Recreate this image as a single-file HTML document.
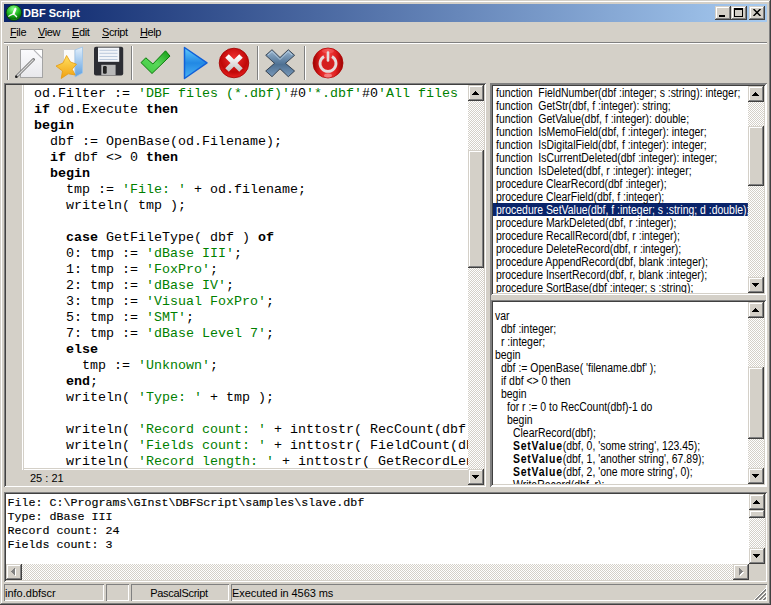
<!DOCTYPE html>
<html><head><meta charset="utf-8">
<style>
*{margin:0;padding:0;box-sizing:border-box}
html,body{width:771px;height:605px;overflow:hidden;background:#D4D0C8;font-family:"Liberation Sans",sans-serif;font-size:11px;color:#000}
.a{position:absolute}
.sunk{box-shadow:inset 1px 1px 0 #808080,inset -1px -1px 0 #fff,inset 2px 2px 0 #404040,inset -2px -2px 0 #D4D0C8}
.btn{background:#D4D0C8;box-shadow:inset -1px -1px 0 #404040,inset 1px 1px 0 #D4D0C8,inset -2px -2px 0 #808080,inset 2px 2px 0 #fff}
.track{background:repeating-conic-gradient(#fff 0 25%,#D4D0C8 0 50%) 0 0/2px 2px}
.mono{font-family:"Liberation Mono",monospace}
pre{font-family:"Liberation Mono",monospace;white-space:pre}
.k{font-weight:bold}
#ex b{letter-spacing:0.9px}
.s{color:#008000}
.tri-up{width:0;height:0;border-left:4px solid transparent;border-right:4px solid transparent;border-bottom:4px solid #000}
.tri-dn{width:0;height:0;border-left:4px solid transparent;border-right:4px solid transparent;border-top:4px solid #000}
.u{text-decoration:underline}
</style></head><body>
<!-- window frame -->
<div class="a" style="left:0;top:0;width:771px;height:605px;box-shadow:inset -1px -1px 0 #404040,inset 1px 1px 0 #D4D0C8,inset -2px -2px 0 #808080,inset 2px 2px 0 #fff"></div>
<!-- title bar -->
<div class="a" style="left:4px;top:4px;width:763px;height:18px;background:linear-gradient(to right,#0A246A,#A6CAF0)"></div>
<div class="a" id="ticon" style="left:0;top:0;width:24px;height:24px">
<svg width="24" height="24" viewBox="0 0 24 24"><defs><radialGradient id="gti" cx="0.45" cy="0.25" r="0.8"><stop offset="0" stop-color="#8aff8a"/><stop offset="0.55" stop-color="#18b018"/><stop offset="0.8" stop-color="#0a700a"/><stop offset="1" stop-color="#30c030"/></radialGradient></defs>
<circle cx="13.9" cy="12.8" r="7.8" fill="url(#gti)" stroke="#052a05" stroke-width="0.7"/>
<path d="M15.6 8.3 L14.2 11.5 L13.2 14 L10.5 15.2 L8.8 16.2 M13.2 14 L15.2 15.2 L16.6 16.8" stroke="#f4f4f4" stroke-width="1.3" fill="none" stroke-linecap="round"/><path d="M15.4 9 L13.6 13.5" stroke="#fff" stroke-width="2.2" stroke-linecap="round"/>
</svg></div>
<div class="a" style="left:23px;top:6px;color:#fff;font-weight:bold;font-size:11px;line-height:14px">DBF Script</div>
<div class="a btn" style="left:715px;top:6px;width:16px;height:14px"><div class="a" style="left:4px;top:9px;width:6px;height:2px;background:#000"></div></div>
<div class="a btn" style="left:731px;top:6px;width:16px;height:14px"><div class="a" style="left:3px;top:2px;width:9px;height:9px;border:1px solid #000;border-top-width:2px"></div></div>
<div class="a btn" style="left:749px;top:6px;width:16px;height:14px"><svg class="a" style="left:4px;top:3px" width="8" height="7" viewBox="0 0 8 7"><path d="M0.5 0 L7.5 7 M7.5 0 L0.5 7" stroke="#000" stroke-width="1.5"/></svg></div>
<!-- menu -->
<div class="a" style="left:10px;top:26px;line-height:13px;letter-spacing:-0.4px"><span class="u">F</span>ile</div>
<div class="a" style="left:38px;top:26px;line-height:13px;letter-spacing:-0.4px"><span class="u">V</span>iew</div>
<div class="a" style="left:72px;top:26px;line-height:13px;letter-spacing:-0.4px"><span class="u">E</span>dit</div>
<div class="a" style="left:102px;top:26px;line-height:13px;letter-spacing:-0.4px"><span class="u">S</span>cript</div>
<div class="a" style="left:140px;top:26px;line-height:13px;letter-spacing:-0.4px"><span class="u">H</span>elp</div>
<div class="a" style="left:4px;top:42px;width:763px;height:1px;background:#808080"></div>
<div class="a" style="left:4px;top:43px;width:763px;height:1px;background:#fff"></div>
<!-- toolbar separators -->
<div class="a" style="left:7px;top:46px;width:1px;height:34px;background:#808080"></div>
<div class="a" style="left:8px;top:46px;width:1px;height:34px;background:#fff"></div>

<svg class="a" style="left:0;top:0" width="360" height="84" viewBox="0 0 360 84">
<defs>
<linearGradient id="gdoc" x1="0" y1="0" x2="0" y2="1"><stop offset="0" stop-color="#fbfbfd"/><stop offset="1" stop-color="#e8e8ec"/></linearGradient>
<linearGradient id="gdoor" x1="0" y1="0" x2="0" y2="1"><stop offset="0" stop-color="#e4f0fb"/><stop offset="1" stop-color="#5b9ee0"/></linearGradient>
<linearGradient id="gstar" x1="0" y1="0" x2="0" y2="1"><stop offset="0" stop-color="#ffe060"/><stop offset="1" stop-color="#f0a010"/></linearGradient>
<linearGradient id="gchk" x1="1" y1="0" x2="0" y2="1"><stop offset="0" stop-color="#109a10"/><stop offset="0.5" stop-color="#5ad85a"/><stop offset="1" stop-color="#3cc83c"/></linearGradient>
<linearGradient id="gplay" x1="0" y1="0" x2="0" y2="1"><stop offset="0" stop-color="#62ccfc"/><stop offset="0.5" stop-color="#2288e4"/><stop offset="1" stop-color="#4ab4f4"/></linearGradient>
<radialGradient id="gred" cx="0.5" cy="0.35" r="0.65"><stop offset="0" stop-color="#f03030"/><stop offset="0.7" stop-color="#c00808"/><stop offset="1" stop-color="#e82020"/></radialGradient>
<linearGradient id="gblx" x1="0" y1="0" x2="0" y2="1"><stop offset="0" stop-color="#9ab6d0"/><stop offset="0.45" stop-color="#5a7c9e"/><stop offset="0.55" stop-color="#4e7092"/><stop offset="1" stop-color="#7a9aba"/></linearGradient>
<linearGradient id="gx" x1="0" y1="0" x2="0" y2="1"><stop offset="0" stop-color="#ffffff"/><stop offset="1" stop-color="#c8c8c8"/></linearGradient>
<linearGradient id="gpow" x1="0" y1="0" x2="1" y2="0"><stop offset="0" stop-color="#9a0000"/><stop offset="0.25" stop-color="#e02020"/><stop offset="0.5" stop-color="#f04040"/><stop offset="0.75" stop-color="#e02020"/><stop offset="1" stop-color="#9a0000"/></linearGradient>
</defs>
<!-- new doc -->
<rect x="20.5" y="49.5" width="22" height="28" fill="url(#gdoc)" stroke="#a4a4a4"/>
<path d="M34 50 L42 58" stroke="#b8b8bc" stroke-width="1.2"/>
<path d="M35 50 H42 V57 Z" fill="#ffffff"/>
<path d="M16.5 76.5 L33.5 59.5" stroke="#707070" stroke-width="3" stroke-linecap="round"/>
<path d="M17 76 L33.5 59.5" stroke="#d8d8d8" stroke-width="1.2"/>
<circle cx="16.3" cy="76.7" r="1.2" fill="#202020"/>
<!-- open -->
<path d="M63.5 49.5 H75 V74.5 H63.5 Z" fill="#fafafa" stroke="#d0d0d0"/>
<path d="M75 50 L82.5 47 V73 L75 77 Z" fill="url(#gdoor)" stroke="#9cc4ea" stroke-width="0.8"/>
<path d="M66.6 55.5 L70.5 62 L76.5 64.2 L72.2 69.2 L75.2 75 L68.2 73.8 L61.2 78.5 L62.5 71 L56 66 L63 63 Z" fill="url(#gstar)" stroke="#e59a10" stroke-width="0.8" stroke-linejoin="round"/>
<!-- floppy -->
<rect x="94" y="46.8" width="29.2" height="28.8" rx="2" fill="#2c2d33"/>
<rect x="98" y="47.6" width="21.2" height="14.2" fill="#f2f4f8"/>
<path d="M99.5 50.3 H117.5 M99.5 53.3 H117.5 M99.5 56.5 H117.5 M99.5 59.5 H117.5" stroke="#b4c4d8" stroke-width="0.9"/>
<rect x="101.3" y="64.8" width="14.3" height="10.4" fill="#b8b8b8"/>
<rect x="103" y="66" width="3.7" height="7.8" rx="1.2" fill="#222"/>
<!-- separator -->
<rect x="131" y="46" width="1" height="34" fill="#808080"/><rect x="132" y="46" width="1" height="34" fill="#fff"/>
<!-- check -->
<path d="M141 62.6 L145.8 57.8 L152.9 64 L165.5 50.8 L170 56.1 L152 73.5 Z" fill="url(#gchk)" stroke="#0a7a0a" stroke-width="1" stroke-linejoin="round"/>
<!-- play -->
<path d="M184.5 47.5 L207 62.8 L184.5 78.5 Z" fill="url(#gplay)" stroke="#1060d8" stroke-width="1.5" stroke-linejoin="round"/>
<!-- red x -->
<circle cx="234" cy="63" r="14.8" fill="url(#gred)" stroke="#a00000" stroke-width="0.8"/>
<path d="M227 56 L241 70 M241 56 L227 70" stroke="url(#gx)" stroke-width="5"/>
<!-- separator -->
<rect x="257" y="46" width="1" height="34" fill="#808080"/><rect x="258" y="46" width="1" height="34" fill="#fff"/>
<!-- blue x -->
<path d="M265.7 55.3 L272 49.7 L280 57.5 L288.3 49.7 L294.6 55.3 L285.5 63.3 L294.6 71 L288.3 76.7 L280 68.8 L272 76.7 L265.7 71 L274.5 63.3 Z" fill="url(#gblx)" stroke="#1e2a38" stroke-width="0.8" stroke-linejoin="round"/>
<path d="M268 55 L272 51.5 L280 59.5 M292 55 L288 51.5 L280 59.5" stroke="#c8dcec" stroke-width="0.9" fill="none" opacity="0.8"/>
<!-- separator -->
<rect x="304" y="46" width="1" height="34" fill="#808080"/><rect x="305" y="46" width="1" height="34" fill="#fff"/>
<!-- power -->
<circle cx="328" cy="63" r="15" fill="url(#gpow)" stroke="#b00000" stroke-width="0.8"/>
<ellipse cx="328" cy="51" rx="6" ry="2.5" fill="#ff9090" opacity="0.3"/>
<ellipse cx="328" cy="75.5" rx="4" ry="2" fill="#ffd0d0" opacity="0.45"/>
<circle cx="328" cy="64" r="6" fill="#d42020"/>
<path d="M324 56.5 A8 8 0 1 0 332 56.5" stroke="#e4dcdc" stroke-width="2.8" fill="none"/>
<path d="M328 52.5 V60.5" stroke="#e4dcdc" stroke-width="2.6" stroke-linecap="round"/>
</svg>

<!-- editor -->
<div class="a sunk" style="left:4px;top:83px;width:482px;height:404px;background:#D4D0C8"></div>
<div class="a" style="left:22px;top:85px;width:446px;height:385px;background:#fff;box-shadow:inset 1px 0 0 #fff,inset 2px 0 0 #D4D0C8,inset 0 -1px 0 #fff,inset 0 -2px 0 #D4D0C8"></div>
<div class="a" style="left:24px;top:85px;width:444px;height:383px;overflow:hidden"><pre class="a" id="code" style="left:10px;top:1px;font-size:13.333px;line-height:16px">od.Filter := <span class="s">'DBF files (*.dbf)'</span>#0<span class="s">'*.dbf'</span>#0<span class="s">'All files</span>
<span class="k">if</span> od.Execute <span class="k">then</span>
<span class="k">begin</span>
  dbf := OpenBase(od.Filename);
  <span class="k">if</span> dbf &lt;&gt; 0 <span class="k">then</span>
  <span class="k">begin</span>
    tmp := <span class="s">'File: '</span> + od.filename;
    writeln( tmp );

    <span class="k">case</span> GetFileType( dbf ) <span class="k">of</span>
    0: tmp := <span class="s">'dBase III'</span>;
    1: tmp := <span class="s">'FoxPro'</span>;
    2: tmp := <span class="s">'dBase IV'</span>;
    3: tmp := <span class="s">'Visual FoxPro'</span>;
    5: tmp := <span class="s">'SMT'</span>;
    7: tmp := <span class="s">'dBase Level 7'</span>;
    <span class="k">else</span>
      tmp := <span class="s">'Unknown'</span>;
    <span class="k">end</span>;
    writeln( <span class="s">'Type: '</span> + tmp );

    writeln( <span class="s">'Record count: '</span> + inttostr( RecCount(dbf
    writeln( <span class="s">'Fields count: '</span> + inttostr( FieldCount(dbf
    writeln( <span class="s">'Record length: '</span> + inttostr( GetRecordLen</pre></div>
<div class="a track" style="left:468px;top:85px;width:16px;height:399px"></div>
<div class="a btn" style="left:468px;top:85px;width:16px;height:16px"><svg class="a" style="left:0;top:0" width="16" height="16" shape-rendering="crispEdges"><path d="M7 6h1v1h-1zM6 7h3v1h-3zM5 8h5v1h-5zM4 9h7v1h-7z" fill="#000"/></svg></div>
<div class="a btn" style="left:468px;top:150px;width:16px;height:118px"></div>
<div class="a btn" style="left:468px;top:469px;width:16px;height:16px"><svg class="a" style="left:0;top:0" width="16" height="16" shape-rendering="crispEdges"><path d="M4 6h7v1h-7zM5 7h5v1h-5zM6 8h3v1h-3zM7 9h1v1h-1z" fill="#000"/></svg></div>
<div class="a" style="left:30px;top:471px;font-size:11px;line-height:14px" class="mono">25 : 21</div>

<!-- function list -->
<div class="a" style="left:490px;top:83px;width:277px;height:404px;box-shadow:inset 1px 1px 0 #808080,inset -1px -1px 0 #fff"></div><div class="a sunk" style="left:491px;top:84px;width:275px;height:211px;background:#fff"></div>
<div class="a" id="listclip" style="left:493px;top:86px;width:255px;height:207px;overflow:hidden"><div class="a" id="list" style="font-size:12px;left:0;top:0;width:293px;transform:scaleX(0.87);transform-origin:0 0"><div style="height:13px;line-height:15px;white-space:nowrap;padding-left:3.45px">function&nbsp;&nbsp;FieldNumber(dbf :integer; s :string): integer;</div><div style="height:13px;line-height:15px;white-space:nowrap;padding-left:3.45px">function&nbsp;&nbsp;GetStr(dbf, f :integer): string;</div><div style="height:13px;line-height:15px;white-space:nowrap;padding-left:3.45px">function&nbsp;&nbsp;GetValue(dbf, f :integer): double;</div><div style="height:13px;line-height:15px;white-space:nowrap;padding-left:3.45px">function&nbsp;&nbsp;IsMemoField(dbf, f :integer): integer;</div><div style="height:13px;line-height:15px;white-space:nowrap;padding-left:3.45px">function&nbsp;&nbsp;IsDigitalField(dbf, f :integer): integer;</div><div style="height:13px;line-height:15px;white-space:nowrap;padding-left:3.45px">function&nbsp;&nbsp;IsCurrentDeleted(dbf :integer): integer;</div><div style="height:13px;line-height:15px;white-space:nowrap;padding-left:3.45px">function&nbsp;&nbsp;IsDeleted(dbf, r :integer): integer;</div><div style="height:13px;line-height:15px;white-space:nowrap;padding-left:3.45px">procedure ClearRecord(dbf :integer);</div><div style="height:13px;line-height:15px;white-space:nowrap;padding-left:3.45px">procedure ClearField(dbf, f :integer);</div><div style="height:13px;line-height:15px;white-space:nowrap;padding-left:3.45px;background:#0A246A;color:#fff">procedure SetValue(dbf, f :integer; s :string; d :double);</div><div style="height:13px;line-height:15px;white-space:nowrap;padding-left:3.45px">procedure MarkDeleted(dbf, r :integer);</div><div style="height:13px;line-height:15px;white-space:nowrap;padding-left:3.45px">procedure RecallRecord(dbf, r :integer);</div><div style="height:13px;line-height:15px;white-space:nowrap;padding-left:3.45px">procedure DeleteRecord(dbf, r :integer);</div><div style="height:13px;line-height:15px;white-space:nowrap;padding-left:3.45px">procedure AppendRecord(dbf, blank :integer);</div><div style="height:13px;line-height:15px;white-space:nowrap;padding-left:3.45px">procedure InsertRecord(dbf, r, blank :integer);</div><div style="height:13px;line-height:15px;white-space:nowrap;padding-left:3.45px">procedure SortBase(dbf :integer; s :string);</div></div></div>
<div class="a track" style="left:748px;top:86px;width:16px;height:207px"></div>
<div class="a btn" style="left:748px;top:86px;width:16px;height:16px"><svg class="a" style="left:0;top:0" width="16" height="16" shape-rendering="crispEdges"><path d="M7 6h1v1h-1zM6 7h3v1h-3zM5 8h5v1h-5zM4 9h7v1h-7z" fill="#000"/></svg></div>
<div class="a btn" style="left:748px;top:126px;width:16px;height:60px"></div>
<div class="a btn" style="left:748px;top:277px;width:16px;height:16px"><svg class="a" style="left:0;top:0" width="16" height="16" shape-rendering="crispEdges"><path d="M4 6h7v1h-7zM5 7h5v1h-5zM6 8h3v1h-3zM7 9h1v1h-1z" fill="#000"/></svg></div>

<!-- example -->
<div class="a sunk" style="left:491px;top:300px;width:275px;height:186px;background:#fff"></div>
<div class="a" id="ex" style="left:492px;top:302px;width:256px;height:182px;overflow:hidden"><div style="position:absolute;left:0;top:-6px;width:340px;font-size:12px;transform:scaleX(0.87);transform-origin:0 0"><div style="height:13px;line-height:15px;white-space:nowrap;padding-left:3.45px">&nbsp;</div><div style="height:13px;line-height:15px;white-space:nowrap;padding-left:3.45px">var&nbsp;</div><div style="height:13px;line-height:15px;white-space:nowrap;padding-left:10.34px">dbf :integer;&nbsp;</div><div style="height:13px;line-height:15px;white-space:nowrap;padding-left:10.34px">r :integer;&nbsp;</div><div style="height:13px;line-height:15px;white-space:nowrap;padding-left:3.45px">begin&nbsp;</div><div style="height:13px;line-height:15px;white-space:nowrap;padding-left:10.34px">dbf := OpenBase( 'filename.dbf' );&nbsp;</div><div style="height:13px;line-height:15px;white-space:nowrap;padding-left:10.34px">if dbf &lt;&gt; 0 then&nbsp;</div><div style="height:13px;line-height:15px;white-space:nowrap;padding-left:10.34px">begin&nbsp;</div><div style="height:13px;line-height:15px;white-space:nowrap;padding-left:17.24px">for r := 0 to RecCount(dbf)-1 do&nbsp;</div><div style="height:13px;line-height:15px;white-space:nowrap;padding-left:17.24px">begin&nbsp;</div><div style="height:13px;line-height:15px;white-space:nowrap;padding-left:24.14px">ClearRecord(dbf);&nbsp;</div><div style="height:13px;line-height:15px;white-space:nowrap;padding-left:24.14px"><b>SetValue</b>(dbf, 0, 'some string', 123.45);&nbsp;</div><div style="height:13px;line-height:15px;white-space:nowrap;padding-left:24.14px"><b>SetValue</b>(dbf, 1, 'another string', 67.89);&nbsp;</div><div style="height:13px;line-height:15px;white-space:nowrap;padding-left:24.14px"><b>SetValue</b>(dbf, 2, 'one more string', 0);&nbsp;</div><div style="height:13px;line-height:15px;white-space:nowrap;padding-left:24.14px">WriteRecord(dbf, r);&nbsp;</div></div></div>
<div class="a track" style="left:748px;top:302px;width:16px;height:182px"></div>
<div class="a btn" style="left:748px;top:302px;width:16px;height:16px"><svg class="a" style="left:0;top:0" width="16" height="16" shape-rendering="crispEdges"><path d="M7 6h1v1h-1zM6 7h3v1h-3zM5 8h5v1h-5zM4 9h7v1h-7z" fill="#000"/></svg></div>
<div class="a btn" style="left:748px;top:367px;width:16px;height:72px"></div>
<div class="a btn" style="left:748px;top:468px;width:16px;height:16px"><svg class="a" style="left:0;top:0" width="16" height="16" shape-rendering="crispEdges"><path d="M4 6h7v1h-7zM5 7h5v1h-5zM6 8h3v1h-3zM7 9h1v1h-1z" fill="#000"/></svg></div>

<!-- output -->
<div class="a sunk" style="left:4px;top:492px;width:763px;height:90px;background:#fff"></div>
<pre class="a" id="out" style="left:7.5px;top:496px;font-size:11.667px;line-height:14px;-webkit-text-stroke:0.15px #000">File: C:\Programs\GInst\DBFScript\samples\slave.dbf
Type: dBase III
Record count: 24
Fields count: 3</pre>
<div class="a track" style="left:6px;top:564px;width:743px;height:16px"></div>
<div class="a btn" style="left:6px;top:564px;width:16px;height:16px"><svg class="a" style="left:0;top:0" width="16" height="16" shape-rendering="crispEdges"><rect x="9" y="5" width="1" height="1" fill="#fff"/><rect x="9" y="6" width="1" height="1" fill="#fff"/><rect x="9" y="7" width="1" height="1" fill="#fff"/><rect x="9" y="8" width="1" height="1" fill="#fff"/><rect x="9" y="9" width="1" height="1" fill="#fff"/><rect x="9" y="10" width="1" height="1" fill="#fff"/><rect x="9" y="11" width="1" height="1" fill="#fff"/><rect x="5" y="7" width="1" height="1" fill="#808080"/><rect x="6" y="6" width="1" height="1" fill="#808080"/><rect x="6" y="7" width="1" height="1" fill="#808080"/><rect x="6" y="8" width="1" height="1" fill="#808080"/><rect x="7" y="5" width="1" height="1" fill="#808080"/><rect x="7" y="6" width="1" height="1" fill="#808080"/><rect x="7" y="7" width="1" height="1" fill="#808080"/><rect x="7" y="8" width="1" height="1" fill="#808080"/><rect x="7" y="9" width="1" height="1" fill="#808080"/><rect x="8" y="4" width="1" height="1" fill="#808080"/><rect x="8" y="5" width="1" height="1" fill="#808080"/><rect x="8" y="6" width="1" height="1" fill="#808080"/><rect x="8" y="7" width="1" height="1" fill="#808080"/><rect x="8" y="8" width="1" height="1" fill="#808080"/><rect x="8" y="9" width="1" height="1" fill="#808080"/><rect x="8" y="10" width="1" height="1" fill="#808080"/></svg></div>
<div class="a btn" style="left:733px;top:564px;width:16px;height:16px"><svg class="a" style="left:0;top:0" width="16" height="16" shape-rendering="crispEdges"><rect x="7" y="10" width="1" height="1" fill="#fff"/><rect x="7" y="11" width="1" height="1" fill="#fff"/><rect x="8" y="9" width="1" height="1" fill="#fff"/><rect x="8" y="10" width="1" height="1" fill="#fff"/><rect x="9" y="8" width="1" height="1" fill="#fff"/><rect x="9" y="9" width="1" height="1" fill="#fff"/><rect x="10" y="8" width="1" height="1" fill="#fff"/><rect x="6" y="4" width="1" height="1" fill="#808080"/><rect x="6" y="5" width="1" height="1" fill="#808080"/><rect x="6" y="6" width="1" height="1" fill="#808080"/><rect x="6" y="7" width="1" height="1" fill="#808080"/><rect x="6" y="8" width="1" height="1" fill="#808080"/><rect x="6" y="9" width="1" height="1" fill="#808080"/><rect x="6" y="10" width="1" height="1" fill="#808080"/><rect x="7" y="5" width="1" height="1" fill="#808080"/><rect x="7" y="6" width="1" height="1" fill="#808080"/><rect x="7" y="7" width="1" height="1" fill="#808080"/><rect x="7" y="8" width="1" height="1" fill="#808080"/><rect x="7" y="9" width="1" height="1" fill="#808080"/><rect x="8" y="6" width="1" height="1" fill="#808080"/><rect x="8" y="7" width="1" height="1" fill="#808080"/><rect x="8" y="8" width="1" height="1" fill="#808080"/><rect x="9" y="7" width="1" height="1" fill="#808080"/></svg></div>
<div class="a track" style="left:749px;top:494px;width:16px;height:70px"></div>
<div class="a" style="left:749px;top:564px;width:16px;height:16px;background:#D4D0C8"></div>
<div class="a btn" style="left:749px;top:494px;width:16px;height:16px"><svg class="a" style="left:0;top:0" width="16" height="16" shape-rendering="crispEdges"><path d="M7 6h1v1h-1zM6 7h3v1h-3zM5 8h5v1h-5zM4 9h7v1h-7z" fill="#000"/></svg></div>
<div class="a btn" style="left:749px;top:510px;width:16px;height:8px"></div>
<div class="a btn" style="left:749px;top:548px;width:16px;height:16px"><svg class="a" style="left:0;top:0" width="16" height="16" shape-rendering="crispEdges"><path d="M4 6h7v1h-7zM5 7h5v1h-5zM6 8h3v1h-3zM7 9h1v1h-1z" fill="#000"/></svg></div>


<!-- status bar -->
<div class="a" style="left:4px;top:584px;width:100px;height:17px;box-shadow:inset 1px 1px 0 #808080,inset -1px -1px 0 #fff"></div>
<div class="a" style="left:106px;top:584px;width:23px;height:17px;box-shadow:inset 1px 1px 0 #808080,inset -1px -1px 0 #fff"></div>
<div class="a" style="left:131px;top:584px;width:98px;height:17px;box-shadow:inset 1px 1px 0 #808080,inset -1px -1px 0 #fff"></div>
<div class="a" style="left:231px;top:584px;width:536px;height:17px;box-shadow:inset 1px 1px 0 #808080,inset -1px -1px 0 #fff"></div>
<div class="a" style="left:5px;top:587px;line-height:13px">info.dbfscr</div>
<div class="a" style="left:130px;top:587px;width:98px;text-align:center;line-height:13px;letter-spacing:-0.3px">PascalScript</div>
<div class="a" style="left:232px;top:587px;line-height:13px;letter-spacing:-0.08px">Executed in 4563 ms</div>
<svg class="a" style="left:754px;top:588px" width="12" height="12" shape-rendering="crispEdges"><rect x="11" y="0" width="1" height="1" fill="#fff"/><rect x="10" y="1" width="1" height="1" fill="#fff"/><rect x="11" y="1" width="1" height="1" fill="#808080"/><rect x="9" y="2" width="1" height="1" fill="#fff"/><rect x="10" y="2" width="1" height="1" fill="#808080"/><rect x="11" y="2" width="1" height="1" fill="#808080"/><rect x="8" y="3" width="1" height="1" fill="#fff"/><rect x="9" y="3" width="1" height="1" fill="#808080"/><rect x="10" y="3" width="1" height="1" fill="#808080"/><rect x="7" y="4" width="1" height="1" fill="#fff"/><rect x="8" y="4" width="1" height="1" fill="#808080"/><rect x="9" y="4" width="1" height="1" fill="#808080"/><rect x="11" y="4" width="1" height="1" fill="#fff"/><rect x="6" y="5" width="1" height="1" fill="#fff"/><rect x="7" y="5" width="1" height="1" fill="#808080"/><rect x="8" y="5" width="1" height="1" fill="#808080"/><rect x="10" y="5" width="1" height="1" fill="#fff"/><rect x="11" y="5" width="1" height="1" fill="#808080"/><rect x="5" y="6" width="1" height="1" fill="#fff"/><rect x="6" y="6" width="1" height="1" fill="#808080"/><rect x="7" y="6" width="1" height="1" fill="#808080"/><rect x="9" y="6" width="1" height="1" fill="#fff"/><rect x="10" y="6" width="1" height="1" fill="#808080"/><rect x="11" y="6" width="1" height="1" fill="#808080"/><rect x="4" y="7" width="1" height="1" fill="#fff"/><rect x="5" y="7" width="1" height="1" fill="#808080"/><rect x="6" y="7" width="1" height="1" fill="#808080"/><rect x="8" y="7" width="1" height="1" fill="#fff"/><rect x="9" y="7" width="1" height="1" fill="#808080"/><rect x="10" y="7" width="1" height="1" fill="#808080"/><rect x="3" y="8" width="1" height="1" fill="#fff"/><rect x="4" y="8" width="1" height="1" fill="#808080"/><rect x="5" y="8" width="1" height="1" fill="#808080"/><rect x="7" y="8" width="1" height="1" fill="#fff"/><rect x="8" y="8" width="1" height="1" fill="#808080"/><rect x="9" y="8" width="1" height="1" fill="#808080"/><rect x="11" y="8" width="1" height="1" fill="#fff"/><rect x="2" y="9" width="1" height="1" fill="#fff"/><rect x="3" y="9" width="1" height="1" fill="#808080"/><rect x="4" y="9" width="1" height="1" fill="#808080"/><rect x="6" y="9" width="1" height="1" fill="#fff"/><rect x="7" y="9" width="1" height="1" fill="#808080"/><rect x="8" y="9" width="1" height="1" fill="#808080"/><rect x="10" y="9" width="1" height="1" fill="#fff"/><rect x="11" y="9" width="1" height="1" fill="#808080"/><rect x="1" y="10" width="1" height="1" fill="#fff"/><rect x="2" y="10" width="1" height="1" fill="#808080"/><rect x="3" y="10" width="1" height="1" fill="#808080"/><rect x="5" y="10" width="1" height="1" fill="#fff"/><rect x="6" y="10" width="1" height="1" fill="#808080"/><rect x="7" y="10" width="1" height="1" fill="#808080"/><rect x="9" y="10" width="1" height="1" fill="#fff"/><rect x="10" y="10" width="1" height="1" fill="#808080"/><rect x="11" y="10" width="1" height="1" fill="#808080"/><rect x="0" y="11" width="1" height="1" fill="#fff"/><rect x="1" y="11" width="1" height="1" fill="#808080"/><rect x="2" y="11" width="1" height="1" fill="#808080"/><rect x="4" y="11" width="1" height="1" fill="#fff"/><rect x="5" y="11" width="1" height="1" fill="#808080"/><rect x="6" y="11" width="1" height="1" fill="#808080"/><rect x="8" y="11" width="1" height="1" fill="#fff"/><rect x="9" y="11" width="1" height="1" fill="#808080"/><rect x="10" y="11" width="1" height="1" fill="#808080"/></svg>

</body></html>
